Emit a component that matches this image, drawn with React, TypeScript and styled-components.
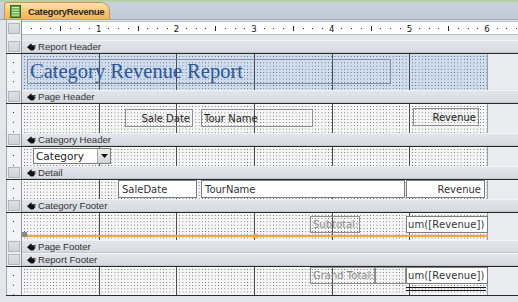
import React from "react";
import styled, { createGlobalStyle } from "styled-components";

const GlobalStyle = createGlobalStyle`
  html, body { margin: 0; padding: 0; }
  body { background: #e3e6eb; font-family: "DejaVu Sans", sans-serif; }
`;

const INCH = 77.67;
const DOT = INCH / 24;

const Root = styled.div`
  width: 518px;
  height: 302px;
  overflow: hidden;
  background: #e3e6eb;
  display: flex;
  flex-direction: column;
`;

const TabStrip = styled.div`
  height: 20px;
  box-sizing: border-box;
  border-top: 2px solid #b6d1a6;
  background: linear-gradient(#c9d2de, #c2ccd9);
  border-bottom: 1px solid #9aa6b6;
  display: flex;
  align-items: flex-end;
  padding-left: 4px;
`;

const Tab = styled.div`
  height: 17px;
  width: 106px;
  box-sizing: border-box;
  display: flex;
  align-items: center;
  gap: 7px;
  padding-left: 5px;
  border: 1px solid #c9974c;
  border-bottom: none;
  border-radius: 3px 9px 0 0;
  background: linear-gradient(#fde6b2, #f9c472 55%, #f6b456);
  font-family: "Liberation Sans", Arial, sans-serif;
  font-size: 9.6px;
  font-weight: 700;
  letter-spacing: -0.35px;
  color: #2b2b2b;
`;

const Designer = styled.div`
  display: flex;
  flex-direction: column;
  padding-left: 6px;
`;

const Row = styled.div<{ $h: number; $line?: boolean; $bottom?: boolean }>`
  display: flex;
  height: ${(p) => p.$h}px;
  box-sizing: border-box;
  border-top: ${(p) => (p.$line ? "1px solid #2a2a2a" : "none")};
  border-bottom: ${(p) => (p.$bottom ? "1px solid #2a2a2a" : "none")};
`;

const Gutter = styled.div<{ $kind: "body" | "bar" | "plain" }>`
  width: 16px;
  flex: none;
  box-sizing: border-box;
  border-left: 1px solid #a3a8b0;
  border-right: 1px solid #8d929a;
  display: flex;
  align-items: center;
  justify-content: center;
  background: ${(p) =>
    p.$kind === "body"
      ? "conic-gradient(at 1px 1px, transparent 270deg, #222 0) 6px 8px / 3px 9.7px repeat-y, #f2f3f5"
      : "#eceef1"};
`;

const Selector = styled.div`
  width: 12px;
  height: 11px;
  box-sizing: border-box;
  border: 1px solid #b3b7bd;
  background: linear-gradient(#dfe1e5, #d0d3d8);
`;

const RulerBox = styled.div`
  flex: 1;
  margin-top: 1px;
  height: 14px;
  box-sizing: border-box;
  background: #fdfdfd;
  border-top: 1px solid #b9bec6;
  border-bottom: 1px solid #b9bec6;
`;

const Bar = styled.div`
  flex: 1;
  display: flex;
  align-items: center;
  gap: 2px;
  padding-left: 5px;
  box-sizing: border-box;
  border-top: 1px solid #f2f3f6;
  border-bottom: 1px solid #c2c6cd;
  background: linear-gradient(#e2e5ea, #d7dae0);
  font-family: "Liberation Sans", Arial, sans-serif;
  font-size: 9.6px;
  color: #333;
`;

const Canvas = styled.div<{ $sel?: boolean }>`
  position: relative;
  width: 466px;
  flex: none;
  box-sizing: border-box;
  border-right: 1px solid #9a9ea5;
  background:
    repeating-linear-gradient(to right, transparent 0 ${INCH - 1}px, #4a4a4a ${INCH - 1}px ${INCH}px),
    conic-gradient(at 1px 1px, transparent 270deg, #4d4d4d 0) 2px 2px / ${DOT}px ${DOT}px,
    ${(p) => (p.$sel ? "#cfddf0" : "#f6f6f6")};
`;

const Filler = styled.div`
  flex: 1;
  background: #eaecf0;
`;

const Ctl = styled.div<{ $x: number; $y: number; $w: number; $h: number }>`
  position: absolute;
  left: ${(p) => p.$x}px;
  top: ${(p) => p.$y}px;
  width: ${(p) => p.$w}px;
  height: ${(p) => p.$h}px;
  box-sizing: border-box;
`;

const Label = styled(Ctl)<{ $align?: string; $muted?: boolean }>`
  border: 1px solid #8e8e8e;
  display: flex;
  align-items: center;
  justify-content: ${(p) => (p.$align === "right" ? "flex-end" : "flex-start")};
  padding: 0 2px;
  font-size: 10px;
  white-space: nowrap;
  color: ${(p) => (p.$muted ? "#8a8a8a" : "#222")};
`;

const TextBox = styled(Ctl)<{ $align?: string }>`
  border: 1px solid #7d7d7d;
  background: #fff;
  display: flex;
  align-items: center;
  justify-content: ${(p) => (p.$align === "right" ? "flex-end" : "flex-start")};
  padding: 0 3px;
  font-size: 10px;
  color: #333;
  white-space: nowrap;
`;

const SumBox = styled(TextBox)`
  padding: 0 1px;
  font-size: 10px;
  letter-spacing: 0.1px;
`;

const Title = styled(Ctl)`
  border: 1px solid #8a8f98;
  padding-left: 2px;
  font-family: "Liberation Serif", "Times New Roman", serif;
  font-size: 20.5px;
  line-height: 22px;
  color: #2b5797;
  white-space: nowrap;
`;

const Combo = styled(Ctl)`
  border: 1px solid #7d7d7d;
  background: #fff;
  display: flex;
  font-size: 10.5px;
  color: #222;
`;

const ComboText = styled.div`
  flex: 1;
  display: flex;
  align-items: center;
  padding-left: 2px;
`;

const ComboBtn = styled.div`
  width: 12px;
  border-left: 1px solid #a5a5a5;
  background: linear-gradient(#eeeeee, #d5d5d5);
  display: flex;
  align-items: center;
  justify-content: center;
`;

const Line = styled(Ctl)<{ $c: string }>`
  background: ${(p) => p.$c};
`;

const Handle = styled(Ctl)<{ $c: string }>`
  background: ${(p) => p.$c};
`;

const Grip = () => (
  <svg width="9" height="8" viewBox="0 0 9 8">
    <path d="M0 4.2 L4 0.6 L5 1.2 L4.2 2.3 L8.6 2.3 L8.6 3.4 L6.5 3.6 L8.4 4.4 L8.2 5.6 L7 5.9 L7.2 7.2 L3.8 7.6 Z" fill="#111" />
  </svg>
);

const ReportIcon = () => (
  <svg width="11" height="13" viewBox="0 0 11 13">
    <rect x="0.5" y="0.5" width="10" height="12" fill="#5fa64a" stroke="#2d6a23" />
    <rect x="2" y="2" width="7" height="1.2" fill="#c9ecb7" />
    <rect x="2" y="4.5" width="7" height="1.2" fill="#c9ecb7" />
    <rect x="2" y="7" width="7" height="1.2" fill="#c9ecb7" />
    <rect x="2" y="9.5" width="7" height="1.2" fill="#c9ecb7" />
  </svg>
);

const Ruler = () => {
  const marks: React.ReactNode[] = [];
  for (let i = 1; i < 52; i++) {
    const x = (i * INCH) / 8 - 1;
    if (i % 8 === 0) {
      marks.push(
        <text key={i} x={x} y={9.5} fontSize="8.5" fontFamily="DejaVu Sans, sans-serif" textAnchor="middle" fill="#111">
          {i / 8}
        </text>
      );
    } else if (i % 4 === 0) {
      marks.push(<rect key={i} x={Math.round(x)} y={4} width={1} height={5} fill="#222" />);
    } else {
      marks.push(<rect key={i} x={Math.round(x)} y={6} width={1} height={1} fill="#222" />);
    }
  }
  return (
    <svg width="496" height="12" style={{ display: "block" }}>
      {marks}
    </svg>
  );
};

const SectionBar = ({ title }: { title: string }) => (
  <Row $h={13}>
    <Gutter $kind="plain">
      <Selector />
    </Gutter>
    <Bar>
      <Grip />
      <span>{title}</span>
    </Bar>
  </Row>
);

const Section = ({
  h,
  sel,
  bottom,
  children,
}: {
  h: number;
  sel?: boolean;
  bottom?: boolean;
  children?: React.ReactNode;
}) => (
  <Row $h={h} $line $bottom={bottom}>
    <Gutter $kind="body" />
    <Canvas $sel={sel}>{children}</Canvas>
    <Filler />
  </Row>
);

export default function App() {
  return (
    <Root>
      <GlobalStyle />
      <TabStrip>
        <Tab>
          <ReportIcon />
          <span>CategoryRevenue</span>
        </Tab>
      </TabStrip>
      <Designer>
        <Row $h={16}>
          <Gutter $kind="plain">
            <Selector />
          </Gutter>
          <RulerBox>
            <Ruler />
          </RulerBox>
        </Row>
        <Row $h={4}>
          <Gutter $kind="plain" />
        </Row>

        <SectionBar title="Report Header" />
        <Section h={37} sel>
          <Title $x={5} $y={5} $w={364} $h={25}>
            Category Revenue Report
          </Title>
        </Section>

        <SectionBar title="Page Header" />
        <Section h={30}>
          <Label $x={103} $y={5} $w={68} $h={18} $align="right">
            Sale Date
          </Label>
          <Label $x={179} $y={5} $w={112} $h={18}>
            Tour Name
          </Label>
          <Label $x={391} $y={4} $w={66} $h={18} $align="right">
            Revenue
          </Label>
        </Section>

        <SectionBar title="Category Header" />
        <Section h={20}>
          <Combo $x={11} $y={1} $w={78} $h={16}>
            <ComboText>Category</ComboText>
            <ComboBtn>
              <svg width="7" height="4" viewBox="0 0 7 4">
                <path d="M0 0 H7 L3.5 4 Z" fill="#111" />
              </svg>
            </ComboBtn>
          </Combo>
        </Section>

        <SectionBar title="Detail" />
        <Section h={20}>
          <TextBox $x={96} $y={0} $w={79} $h={18}>
            SaleDate
          </TextBox>
          <TextBox $x={179} $y={0} $w={204} $h={18}>
            TourName
          </TextBox>
          <TextBox $x={384} $y={0} $w={79} $h={18} $align="right">
            Revenue
          </TextBox>
        </Section>

        <SectionBar title="Category Footer" />
        <Section h={28}>
          <Label $x={288} $y={3} $w={50} $h={17} $muted>
            Subtotal:
          </Label>
          <SumBox $x={384} $y={3} $w={82} $h={17}>
            um([Revenue])
          </SumBox>
          <Line $x={0} $y={22} $w={466} $h={2} $c="#f2a53a" />
          <Handle $x={0} $y={19} $w={5} $h={5} $c="#8a8a8a" />
          <Handle $x={231} $y={21} $w={4} $h={4} $c="#f2a53a" />
        </Section>

        <SectionBar title="Page Footer" />
        <SectionBar title="Report Footer" />
        <Section h={30} bottom>
          <Label $x={288} $y={0} $w={65} $h={17} $muted>
            Grand Total:
          </Label>
          <Label $x={353} $y={0} $w={31} $h={17} />
          <SumBox $x={384} $y={0} $w={82} $h={17}>
            um([Revenue])
          </SumBox>
          <Line $x={384} $y={20} $w={80} $h={1} $c="#111" />
          <Line $x={384} $y={23} $w={80} $h={1} $c="#111" />
        </Section>
      </Designer>
    </Root>
  );
}
